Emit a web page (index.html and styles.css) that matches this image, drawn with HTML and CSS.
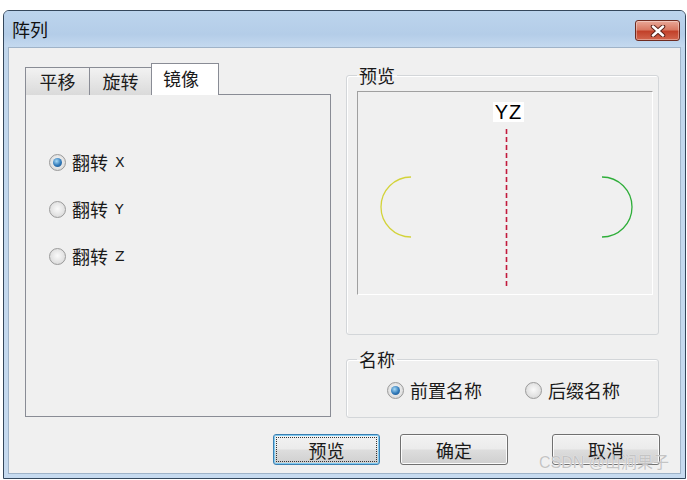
FILE: index.html
```html
<!DOCTYPE html>
<html lang="zh-CN">
<head>
  <meta charset="UTF-8">
  <title>阵列</title>
  <link rel="stylesheet" href="styles.css">
</head>
<body>
  <div class="window">
    <div class="titlebar">
      <span class="title">阵列</span>
      <button class="close">
        <svg width="16" height="12" viewBox="0 0 16 12">
          <path d="M3 1.5 L13 10.5 M13 1.5 L3 10.5" stroke="#5a2118" stroke-width="4.5" stroke-linecap="round"/>
          <path d="M3 1.5 L13 10.5 M13 1.5 L3 10.5" stroke="#fff" stroke-width="2.5" stroke-linecap="round"/>
        </svg>
      </button>
    </div>

    <div class="client">
      <div class="main">
        <!-- 左侧选项卡 -->
        <div class="tabs">
          <div class="tab-row">
            <div class="tab t1">平移</div>
            <div class="tab t2">旋转</div>
            <div class="tab active">镜像</div>
          </div>
          <div class="tab-panel">
            <label class="radio checked"><span class="dot"></span>翻转<span class="axis">X</span></label>
            <label class="radio"><span class="dot"></span>翻转<span class="axis">Y</span></label>
            <label class="radio"><span class="dot"></span>翻转<span class="axis">Z</span></label>
          </div>
        </div>

        <!-- 右侧预览和名称 -->
        <div class="side">
          <fieldset class="group preview">
            <legend>预览</legend>
            <div class="canvas">
              <svg width="295" height="203" viewBox="0 0 295 203">
                <rect x="135" y="10" width="31" height="20" fill="#fff"/>
                <text x="150.5" y="27" text-anchor="middle" class="yz">YZ</text>
                <line x1="148.5" y1="37" x2="148.5" y2="196" stroke="#c21a3c" stroke-width="1.6" stroke-dasharray="5 3"/>
                <path d="M53 85 A30 30 0 0 0 53 145" fill="none" stroke="#d3d33a" stroke-width="1.3"/>
                <path d="M244 85 A30 30 0 0 1 244 145" fill="none" stroke="#2fae3a" stroke-width="1.3"/>
              </svg>
            </div>
          </fieldset>
          <fieldset class="group names">
            <legend>名称</legend>
            <div class="name-row">
              <label class="radio checked"><span class="dot"></span>前置名称</label>
              <label class="radio"><span class="dot"></span>后缀名称</label>
            </div>
          </fieldset>
        </div>
      </div>

      <div class="buttons">
        <button class="btn default">预览</button>
        <button class="btn">确定</button>
        <button class="btn cancel">取消</button>
      </div>
    </div>

    <div class="watermark">CSDN @山涧果子</div>
  </div>
</body>
</html>
```

FILE: styles.css
```css
/* 基础 */
* { box-sizing: border-box; margin: 0; padding: 0; }
body {
  background: #fff;
  font-family: "Noto Sans CJK SC", "Liberation Sans", sans-serif;
  font-size: 18px;
  color: #1a1a1a;
}
/* 窗口外框 */
.window {
  position: relative;
  width: 683px;
  height: 469px;
  margin: 10px 0 0 3px;
  border: 1px solid #34475c;
  border-radius: 6px 6px 0 0;
  background: linear-gradient(#c0d6ec, #c6daef);
  display: flex;
  flex-direction: column;
}
.titlebar {
  height: 36px;
  display: flex;
  align-items: center;
  justify-content: space-between;
  padding: 0 5px 0 8px;
  border-radius: 5px 5px 0 0;
  background: linear-gradient(#bcd4ed, #b4cde8 65%, #c4d9ef);
}
.title {
  font-size: 18px;
  line-height: 18px;
  color: #111;
}
.close {
  width: 45px;
  height: 21px;
  margin-top: 3px;
  border: 1px solid #6e2b20;
  border-radius: 3px;
  background: linear-gradient(#e9a898, #d97a64 45%, #c2412a 55%, #d2664e);
  box-shadow: inset 0 0 0 1px rgba(255,255,255,0.35);
  display: flex;
  align-items: center;
  justify-content: center;
}
/* 客户区 */
.client {
  flex: 1;
  margin: 0 4px 4px 4px;
  border: 1px solid #9fb3c8;
  background: #f0f0f0;
  padding: 15px 20px 7px 16px;
  display: flex;
  flex-direction: column;
}
.main {
  height: 354px;
  display: flex;
  gap: 15px;
}
/* 选项卡 */
.tabs {
  width: 306px;
  display: flex;
  flex-direction: column;
}
.tab-row {
  height: 31px;
  display: flex;
  align-items: flex-end;
}
.tab {
  height: 28px;
  margin-bottom: -1px;
  margin-right: -1px;
  border: 1px solid #898c95;
  border-bottom: none;
  background: linear-gradient(#f2f2f2, #e6e6e6 50%, #dadada);
  line-height: 26px;
  text-align: center;
  position: relative;
}
.tab.t1 { width: 65px; }
.tab.t2 { width: 63px; }
.tab.active {
  width: 68px;
  height: 32px;
  background: #fff;
  z-index: 1;
  padding-right: 8px;
  line-height: 28px;
}
.tab-panel {
  flex: 1;
  border: 1px solid #898c95;
  background: #f0f0f0;
  padding: 57px 0 0 23px;
  display: flex;
  flex-direction: column;
  gap: 27px;
}
/* 单选按钮 */
.radio {
  display: flex;
  align-items: center;
  gap: 6px;
  height: 20px;
  line-height: 20px;
}
.axis {
  font-family: "DejaVu Sans", sans-serif;
  font-size: 14px;
  margin-left: 1px;
}
.dot {
  width: 17px;
  height: 17px;
  border-radius: 50%;
  border: 1px solid #9a9a9a;
  background: radial-gradient(circle at 50% 45%, #fafafa, #e2e2e2 60%, #cfcfcf);
  display: flex;
  align-items: center;
  justify-content: center;
}
.checked .dot::after {
  content: "";
  width: 9px;
  height: 9px;
  border-radius: 50%;
  background: radial-gradient(circle at 40% 35%, #a9dbf7, #2f78b8 55%, #1a4a80);
}
/* 分组框 */
.side {
  width: 313px;
  padding-top: 3px;
  display: flex;
  flex-direction: column;
}
.group {
  min-width: 0;
  border: 1px solid #d3d6d9;
  border-radius: 3px;
  box-shadow: inset 1px 1px 0 #fff;
}
.group legend {
  padding: 0 2px;
  font-size: 18px;
  line-height: 18px;
}
.preview {
  padding: 7px 5px 39px 10px;
}
.canvas {
  height: 204px;
  border-top: 1px solid #a0a0a0;
  border-left: 1px solid #a0a0a0;
  border-bottom: 1px solid #fff;
  border-right: 1px solid #fff;
}
.canvas svg { display: block; }
.yz {
  font-family: "Liberation Sans", sans-serif;
  font-size: 20px;
  letter-spacing: 1px;
  fill: #000;
}
.names {
  margin-top: 15px;
  padding: 12px 0 17px 10px;
}
.name-row {
  display: flex;
  gap: 43px;
  margin-left: 30px;
}
/* 底部按钮 */
.buttons {
  margin-top: 17px;
  display: flex;
  justify-content: flex-end;
  gap: 20px;
}
.btn {
  width: 108px;
  height: 31px;
  border: 1px solid #707070;
  border-radius: 3px;
  background: linear-gradient(#f2f2f2, #ebebeb 48%, #dddddd 52%, #cfcfcf);
  box-shadow: inset 0 0 0 1px #fbfbfb;
  font-family: "Noto Sans CJK SC", sans-serif;
  font-size: 18px;
  color: #1a1a1a;
}
.btn.default {
  width: 107px;
  border-color: #3c7fb1;
  box-shadow: inset 0 0 0 1px #7fcbf2;
  outline: 1px dotted #333;
  outline-offset: -4px;
}
.btn.cancel { margin-left: 24px; }
/* 水印 */
.watermark {
  position: absolute;
  right: 16px;
  bottom: 5px;
  font-family: "Liberation Sans", "Noto Sans CJK SC", sans-serif;
  font-size: 16px;
  color: #c4c4c4;
  text-shadow: 0 0 1px #fff;
}
```
